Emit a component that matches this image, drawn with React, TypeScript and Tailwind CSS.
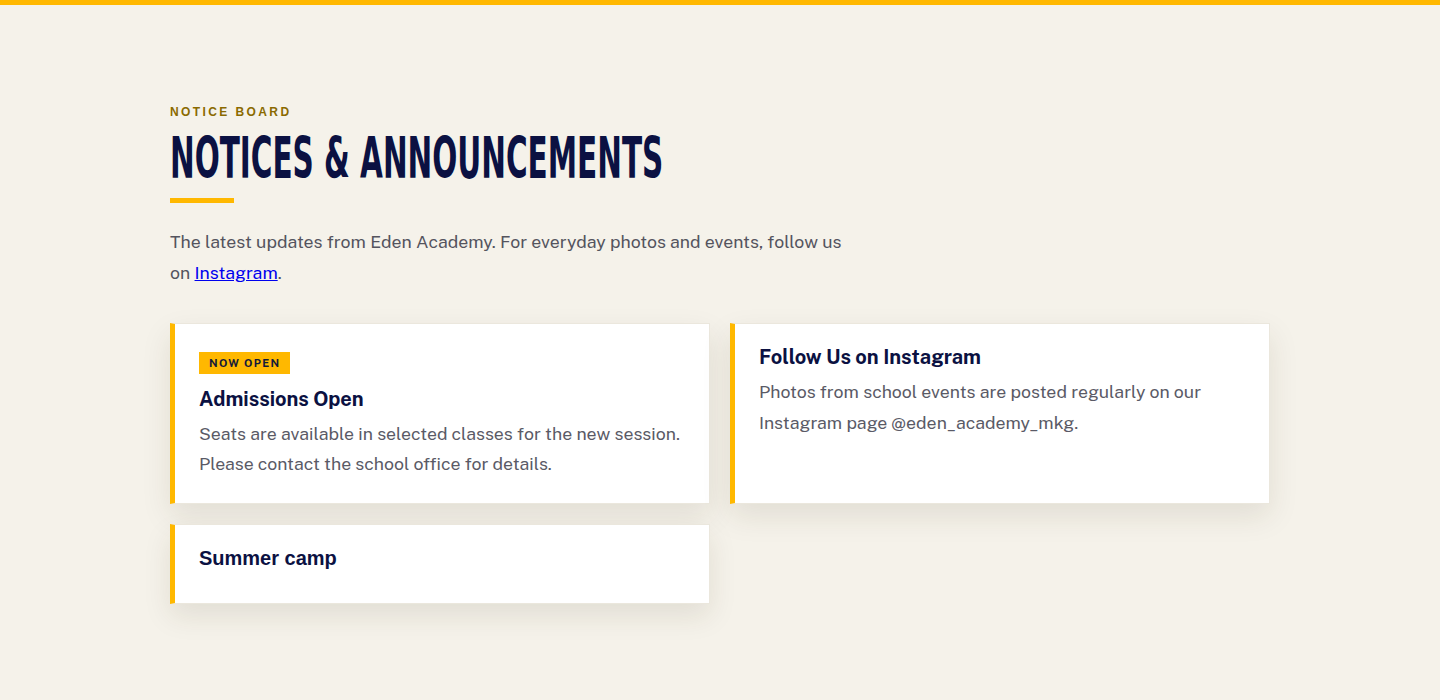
import React from "react";

const body = { fontFamily: '"Public Sans", Inter, "Noto Sans", sans-serif' };
const cardCls =
  "bg-white border border-[#ebe7dd] border-l-[5px] border-l-[#ffb800] pl-6 pr-5 shadow-[0_12px_28px_rgba(60,50,20,0.10)]";

export default function App() {
  return (
    <div className="min-h-[700px] bg-[#f5f2ea] border-t-[5px] border-[#ffb800]" style={body}>
      <div className="mx-auto w-[1100px] pt-[101px] pb-20">
        <div className="text-[12px] font-bold tracking-[0.2em] text-[#8a6a00] leading-none" style={{ fontFamily: '"Liberation Sans", Arial, sans-serif' }}>
          NOTICE BOARD
        </div>
        <div>
          <h1
            className="mt-[12px] inline-block origin-left scale-x-[0.575] text-[57px] font-bold leading-none text-[#0b1142] whitespace-nowrap"
            style={{ fontFamily: '"Liberation Sans Narrow", "DejaVu Sans Condensed", "Liberation Sans", sans-serif' }}
          >
            NOTICES &amp; ANNOUNCEMENTS
          </h1>
        </div>
        <div className="mt-[11px] h-[5px] w-16 bg-[#ffb800]" />
        <p className="mt-[23px] max-w-[680px] text-[17.7px] leading-[31px] text-[#54545e]">
          The latest updates from Eden Academy. For everyday photos and events, follow us on{" "}
          <a href="#" className="text-[#0000ee] underline">Instagram</a>.
        </p>
        <div className="mt-[35px] grid grid-cols-2 gap-5 items-start">
          <div className={`${cardCls} pt-7 pb-[24px]`}>
            <div className="w-fit bg-[#ffb800] px-[10px] py-[5px] text-[11px] font-bold leading-[12px] tracking-[0.12em] text-[#141a3a]">
              NOW OPEN
            </div>
            <h3 className="mt-[12px] text-[20px] font-bold leading-[26px] text-[#0b1142]">Admissions Open</h3>
            <p className="mt-[7px] text-[17.7px] leading-[30px] text-[#5a5a66]">
              Seats are available in selected classes for the new session. Please contact the school office for details.
            </p>
          </div>
          <div className={`${cardCls} self-stretch pt-5 pb-6`}>
            <h3 className="text-[20px] font-bold leading-[26px] text-[#0b1142]">Follow Us on Instagram</h3>
            <p className="mt-[6px] text-[17.7px] leading-[31px] text-[#5a5a66]">
              Photos from school events are posted regularly on our Instagram page @eden_academy_mkg.
            </p>
          </div>
          <div className={`${cardCls} pt-5 pb-8`}>
            <h3 className="text-[20px] font-bold leading-[26px] text-[#0b1142]" style={{ fontFamily: '"Liberation Sans", Arial, sans-serif' }}>
              Summer camp
            </h3>
          </div>
        </div>
      </div>
    </div>
  );
}
